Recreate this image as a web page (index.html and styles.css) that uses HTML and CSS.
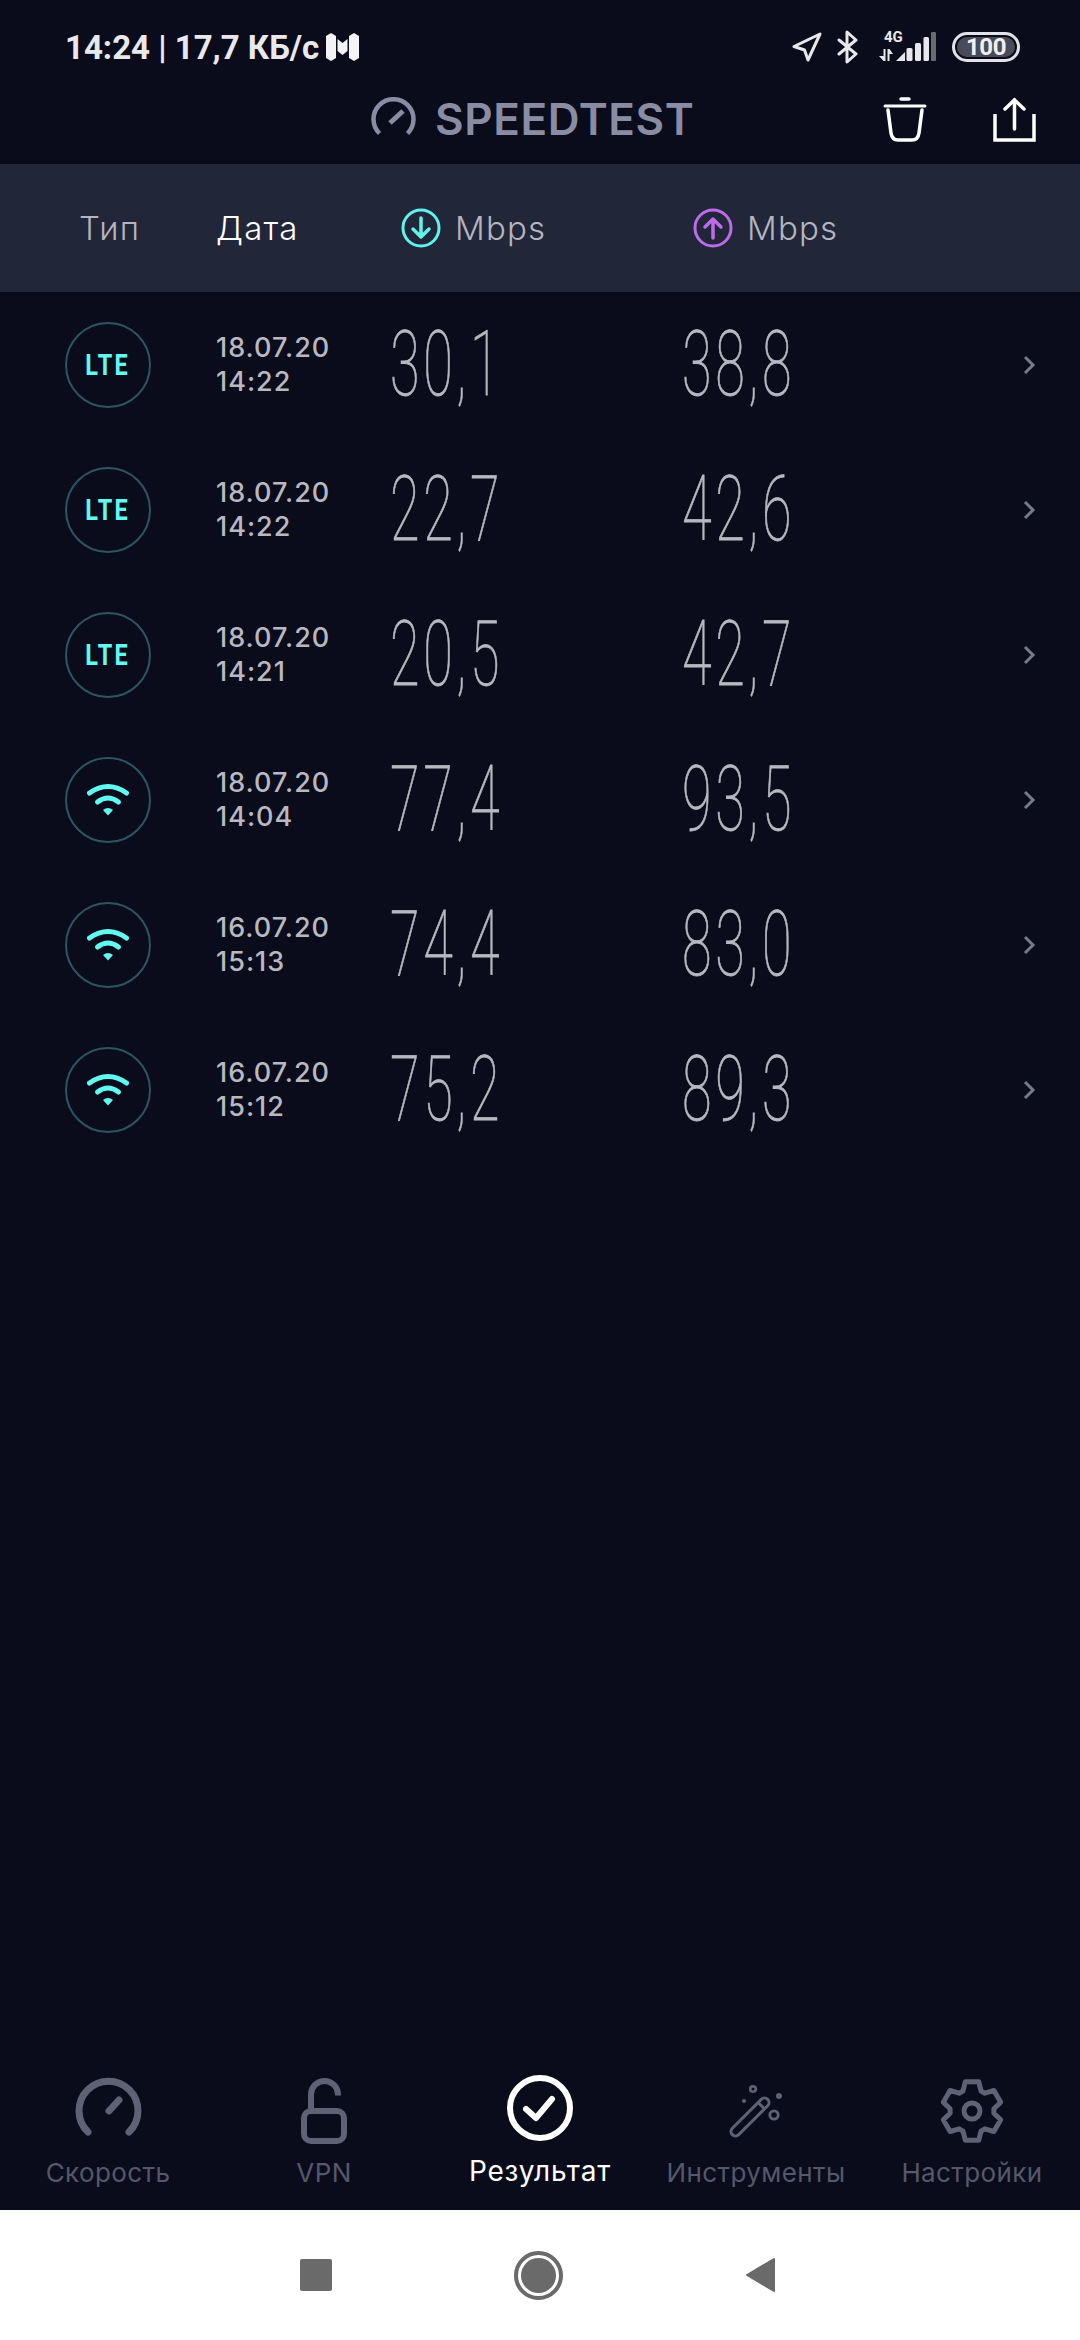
FILE: index.html
```html
<!DOCTYPE html>
<html lang="ru">
<head>
<meta charset="utf-8">
<title>Speedtest</title>
<link rel="stylesheet" href="styles.css">
</head>
<body>
<div class="page">
  <div class="status">
    <div class="status-left">
      <span class="status-text">14:24 | 17,7 КБ/с</span>
      <svg width="33" height="28" viewBox="0 0 33 28"><g fill="#f4f4f6"><path d="M0 3 L5 0 L10 3 V25 L5 28 L0 25Z"/><path d="M23 3 L28 0 L33 3 V25 L28 28 L23 25Z"/><path d="M11.500 6 L16.500 10 L21.500 6 V18 L16.500 22 L11.500 18Z"/></g></svg>
    </div>
    <div class="status-right">
      <svg width="30" height="30" viewBox="0 0 30 30"><path d="M2 14.500 L28 2 L16 28 L12.500 18Z" fill="none" stroke="#e8e8ec" stroke-width="3" stroke-linejoin="round"/></svg>
      <svg class="bt" width="21" height="34" viewBox="0 0 21 34"><path d="M2 10 L19 24 L10 32 V2 L19 10 L2 24" fill="none" stroke="#e8e8ec" stroke-width="3" stroke-linejoin="round" stroke-linecap="round"/></svg>
      <div class="net">
        <span class="net-label">4G</span>
        <svg width="57" height="30" viewBox="0 0 57 30"><g fill="#e8e8ec"><path d="M4.500 17 H6.500 V29 H4.500Z M0 24 H4.500 V29Z M8.500 17 H10.500 V29 H8.500Z M10.500 17 V22 H14Z"/><path d="M17 29 L26 20 V29Z"/><rect x="27.500" y="16" width="6" height="13" rx="1.500"/><rect x="36" y="11" width="6" height="18" rx="1.500"/><rect x="44.500" y="5" width="5.500" height="24" rx="1.500"/></g><rect x="52" y="0" width="5" height="29" rx="1" fill="#6a6a72"/></svg>
      </div>
      <div class="battery"><span class="battery-fill">100</span></div>
    </div>
  </div>

  <header class="appbar">
    <div class="brand">
      <svg width="46" height="44" viewBox="0 0 46 44"><path d="M8.500 36.500 A20 20 0 1 1 36.500 36.500" fill="none" stroke="#8a8ca3" stroke-width="4.500"/><path d="M19 26 L32 14" stroke="#8a8ca3" stroke-width="5"/></svg>
      <span class="brand-name">SPEEDTEST</span>
    </div>
    <div class="actions">
      <svg width="44" height="45" viewBox="0 0 44 45"><g fill="none" stroke="#fff" stroke-width="3.500" stroke-linecap="round"><path d="M18 2 H26"/><path d="M2 9 H42" stroke-width="3"/><path d="M5 13 L8 36 Q9 43 15 43 H29 Q35 43 36 36 L39 13"/></g></svg>
      <svg width="43" height="45" viewBox="0 0 43 45"><g fill="none" stroke="#fff" stroke-width="3.500" stroke-linecap="round"><path d="M2 17 V43 H41 V17" stroke-linecap="butt"/><path d="M21.500 3 V32"/><path d="M12 12 L21.500 3 L31 12"/></g></svg>
    </div>
  </header>

  <div class="thead">
    <span class="th th-type">Тип</span>
    <span class="th th-date">Дата</span>
    <span class="th th-speed">
      <svg width="40" height="40" viewBox="0 0 40 40"><g fill="none" stroke="#5ff3ea" stroke-width="3"><circle cx="20" cy="20" r="18"/><path d="M20 10 V29 M12 21 L20 29 L28 21" stroke-linecap="round" stroke-linejoin="round" stroke-width="3.500"/></g></svg>
      Mbps
    </span>
    <span class="th th-speed">
      <svg width="40" height="40" viewBox="0 0 40 40"><g fill="none" stroke="#bd6be8" stroke-width="3"><circle cx="20" cy="20" r="18"/><path d="M20 30 V11 M12 19 L20 11 L28 19" stroke-linecap="round" stroke-linejoin="round" stroke-width="3.500"/></g></svg>
      Mbps
    </span>
  </div>

  <main class="list">
    <div class="row">
      <div class="badge"><span class="lte">LTE</span></div>
      <div class="when">18.07.20<br>14:22</div>
      <div class="num"><span>30,1</span></div>
      <div class="num"><span>38,8</span></div>
      <svg class="chev" width="14" height="22" viewBox="0 0 14 22"><path d="M3 3 L11 11 L3 19" fill="none" stroke="#777a88" stroke-width="3"/></svg>
    </div>
    <div class="row">
      <div class="badge"><span class="lte">LTE</span></div>
      <div class="when">18.07.20<br>14:22</div>
      <div class="num"><span>22,7</span></div>
      <div class="num"><span>42,6</span></div>
      <svg class="chev" width="14" height="22" viewBox="0 0 14 22"><path d="M3 3 L11 11 L3 19" fill="none" stroke="#777a88" stroke-width="3"/></svg>
    </div>
    <div class="row">
      <div class="badge"><span class="lte">LTE</span></div>
      <div class="when">18.07.20<br>14:21</div>
      <div class="num"><span>20,5</span></div>
      <div class="num"><span>42,7</span></div>
      <svg class="chev" width="14" height="22" viewBox="0 0 14 22"><path d="M3 3 L11 11 L3 19" fill="none" stroke="#777a88" stroke-width="3"/></svg>
    </div>
    <div class="row">
      <div class="badge"><svg width="42" height="33" viewBox="0 0 42 33"><g fill="none" stroke="#5ffbf1" stroke-width="5" stroke-linecap="round"><path d="M2.500 10 Q21 -3 39.500 10"/><path d="M10.500 19 Q21 11 31.500 19"/></g><path d="M16 27 Q21 23 26 27 L21 32.500Z" fill="#5ffbf1"/></svg></div>
      <div class="when">18.07.20<br>14:04</div>
      <div class="num"><span>77,4</span></div>
      <div class="num"><span>93,5</span></div>
      <svg class="chev" width="14" height="22" viewBox="0 0 14 22"><path d="M3 3 L11 11 L3 19" fill="none" stroke="#777a88" stroke-width="3"/></svg>
    </div>
    <div class="row">
      <div class="badge"><svg width="42" height="33" viewBox="0 0 42 33"><g fill="none" stroke="#5ffbf1" stroke-width="5" stroke-linecap="round"><path d="M2.500 10 Q21 -3 39.500 10"/><path d="M10.500 19 Q21 11 31.500 19"/></g><path d="M16 27 Q21 23 26 27 L21 32.500Z" fill="#5ffbf1"/></svg></div>
      <div class="when">16.07.20<br>15:13</div>
      <div class="num"><span>74,4</span></div>
      <div class="num"><span>83,0</span></div>
      <svg class="chev" width="14" height="22" viewBox="0 0 14 22"><path d="M3 3 L11 11 L3 19" fill="none" stroke="#777a88" stroke-width="3"/></svg>
    </div>
    <div class="row">
      <div class="badge"><svg width="42" height="33" viewBox="0 0 42 33"><g fill="none" stroke="#5ffbf1" stroke-width="5" stroke-linecap="round"><path d="M2.500 10 Q21 -3 39.500 10"/><path d="M10.500 19 Q21 11 31.500 19"/></g><path d="M16 27 Q21 23 26 27 L21 32.500Z" fill="#5ffbf1"/></svg></div>
      <div class="when">16.07.20<br>15:12</div>
      <div class="num"><span>75,2</span></div>
      <div class="num"><span>89,3</span></div>
      <svg class="chev" width="14" height="22" viewBox="0 0 14 22"><path d="M3 3 L11 11 L3 19" fill="none" stroke="#777a88" stroke-width="3"/></svg>
    </div>
  </main>

  <nav class="tabs">
    <div class="tab">
      <svg width="72" height="72" viewBox="0 0 72 72"><g transform="translate(3 3)" fill="none" stroke="#5f6275" stroke-linecap="round" stroke-width="7"><path d="M13 54 A29.500 29.500 0 1 1 54 54"/><path d="M34 33 L44 22"/></g></svg>
      <span class="tab-label">Скорость</span>
    </div>
    <div class="tab">
      <svg width="72" height="72" viewBox="0 0 72 72"><g transform="translate(13 3)" fill="none" stroke="#5f6275" stroke-width="6"><rect x="3" y="33" width="40" height="30" rx="7"/><path d="M10 33 V16.500 a13.500 13.500 0 0 1 27 0 v1"/></g></svg>
      <span class="tab-label">VPN</span>
    </div>
    <div class="tab tab-active">
      <svg width="72" height="72" viewBox="0 0 72 72"><g transform="translate(3 0)" fill="none" stroke="#fff" stroke-width="6" stroke-linecap="round" stroke-linejoin="round"><circle cx="33" cy="33" r="30"/><path d="M19 34 L29 43 L45 24"/></g></svg>
      <span class="tab-label">Результат</span>
    </div>
    <div class="tab">
      <svg width="72" height="72" viewBox="0 0 72 72"><g transform="translate(9 10)" fill="none" stroke="#5f6275"><g transform="rotate(-45 21 32)" stroke-width="3"><rect x="-4" y="27.500" width="50" height="9" rx="4.500"/><path d="M37 27.500 V36.500"/></g><circle cx="24" cy="4" r="2.800" stroke-width="2.600"/><circle cx="45" cy="30" r="4.200" stroke-width="2.800"/><circle cx="50" cy="11" r="3" fill="#5f6275" stroke="none"/><circle cx="15" cy="16" r="2" fill="#5f6275" stroke="none"/></g></svg>
      <span class="tab-label">Инструменты</span>
    </div>
    <div class="tab">
      <svg width="72" height="72" viewBox="0 0 72 72"><g transform="translate(3 3)" fill="none" stroke="#5f6275" stroke-width="5" stroke-linejoin="round"><path d="M24 13 L26.300 3.800 H39.800 L42 13 L45.900 15.200 L54.900 12.500 L61.700 24.200 L54.900 30.700 V35.300 L61.700 41.800 L54.900 53.500 L45.900 50.800 L42 53.100 L39.800 62.200 H26.300 L24 53.100 L20.100 50.800 L11.100 53.500 L4.300 41.800 L11.100 35.300 V30.700 L4.300 24.200 L11.100 12.500 L20.100 15.200Z"/><circle cx="33" cy="33" r="8"/></g></svg>
      <span class="tab-label">Настройки</span>
    </div>
  </nav>

  <footer class="sysnav">
    <span class="nav-square"></span>
    <span class="nav-home"><span class="nav-home-dot"></span></span>
    <svg width="31" height="36" viewBox="0 0 31 36"><path d="M2 18 L29 2 V34Z" fill="#6a6a6a" stroke="#6a6a6a" stroke-width="2" stroke-linejoin="round"/></svg>
  </footer>
</div>
</body>
</html>
```
FILE: styles.css
```css
* { box-sizing: border-box; }
html, body { margin: 0; padding: 0; }
body { background: #0a0c1b; font-family: "Inter", "Noto Sans", sans-serif; }
svg { display: block; flex: none; }

.page { width: 1080px; height: 2340px; display: flex; flex-direction: column; background: #0a0c1b; overflow: hidden; }

.status { height: 94px; flex: none; display: flex; align-items: center; justify-content: space-between; padding: 0 60px 0 65px; }
.status-left { display: flex; align-items: center; gap: 7px; }
.status-text { font-family: "Roboto", sans-serif; font-weight: 700; font-size: 33px; color: #e9e9ec; white-space: nowrap; }
.status-right { display: flex; align-items: center; }
.bt { margin-left: 15px; }
.net { position: relative; margin-left: 21px; width: 57px; height: 30px; }
.net-label { position: absolute; left: 5px; top: -4px; font-family: "Roboto", sans-serif; font-weight: 700; font-size: 15px; line-height: 18px; color: #e8e8ec; }
.battery { margin-left: 16px; width: 68px; height: 30px; border: 3px solid #e2e2e6; border-radius: 15px; padding: 2px; display: flex; }
.battery-fill { flex: 1; background: #4a4b5a; border-radius: 10px; color: #f0f0f2; font-family: "Roboto", sans-serif; font-weight: 700; font-size: 24px; line-height: 20px; letter-spacing: -0.5px; text-align: center; }

.appbar { height: 70px; flex: none; display: flex; align-items: flex-start; justify-content: space-between; padding: 3px 44px 0 371px; }
.brand { display: flex; align-items: center; gap: 18px; }
.brand-name { font-weight: 600; font-size: 44px; line-height: 44px; letter-spacing: 0.6px; color: #8a8ca3; }
.actions { display: flex; gap: 66px; }

.thead { height: 128px; flex: none; background: #212639; display: grid; grid-template-columns: 137px 185px 292px 1fr; align-items: center; padding-left: 79px; }
.th { font-weight: 300; font-size: 33px; letter-spacing: 1.2px; color: #b4b5be; display: flex; align-items: center; gap: 14px; }
.th-date { color: #fff; }

.list { flex: 1; display: flex; flex-direction: column; }
.row { height: 145px; flex: none; display: grid; grid-template-columns: 151px 174px 292px 340px 1fr; align-items: center; padding-left: 65px; }
.badge { width: 86px; height: 86px; border-radius: 50%; border: 2px solid #2c5560; display: flex; align-items: center; justify-content: center; }
.lte { font-family: "Roboto", sans-serif; font-weight: 700; font-size: 30px; line-height: 30px; color: #5ffbf1; letter-spacing: 3px; transform: scaleX(0.78); }
.when { font-weight: 500; font-size: 27px; line-height: 34px; letter-spacing: 1px; color: #b8b8c0; padding-top: 1px; }
.num { font-family: "Roboto", sans-serif; font-weight: 100; font-size: 90px; line-height: 90px; color: #b8b8c0; }
.num span { display: inline-block; transform: scaleX(0.6); transform-origin: left center; letter-spacing: 6px; -webkit-text-stroke: 0.8px #b8b8c0; }
.chev { justify-self: start; }

.tabs { height: 150px; flex: none; display: grid; grid-template-columns: repeat(5, 216px); padding-top: 15px; }
.tab { display: flex; flex-direction: column; align-items: center; }
.tab-label { margin-top: 9px; font-weight: 400; font-size: 26px; line-height: 34px; letter-spacing: 0.4px; color: #55586a; white-space: nowrap; }
.tab-active .tab-label { color: #fff; margin-top: 7px; font-size: 28px; letter-spacing: 0.8px; }

.sysnav { height: 130px; flex: none; background: #fff; display: flex; align-items: center; justify-content: center; gap: 182px; padding-right: 4px; }
.nav-square { width: 32px; height: 32px; background: #6a6a6a; border-radius: 2px; }
.nav-home { width: 49px; height: 49px; border-radius: 50%; border: 4px solid #6a6a6a; padding: 3px; display: flex; }
.nav-home-dot { flex: 1; background: #6a6a6a; border-radius: 50%; }
```
